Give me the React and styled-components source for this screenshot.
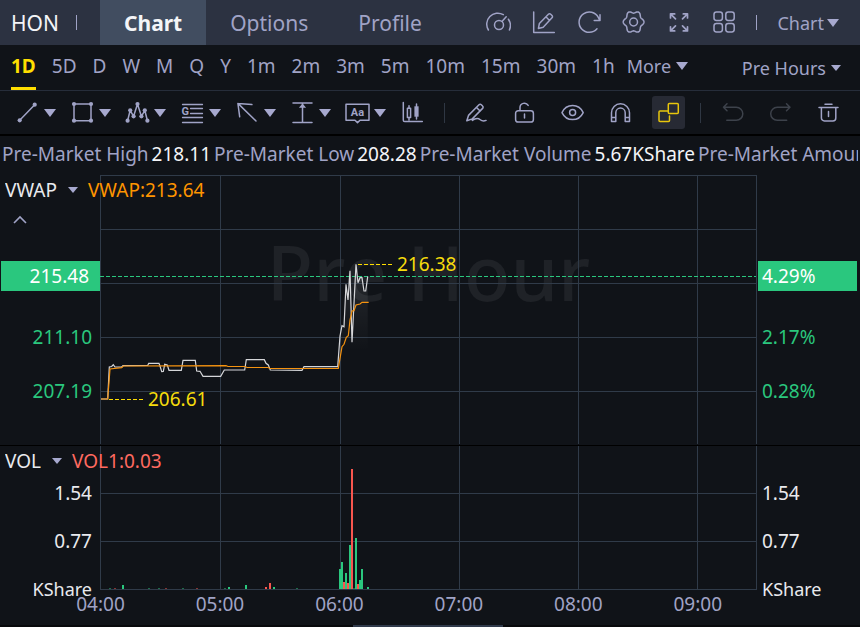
import { useState } from "react";
import styled, { createGlobalStyle } from "styled-components";


const GlobalStyle = createGlobalStyle`
*{
  box-sizing: border-box;
}
body{
  margin: 0;
  background: #101318;
  color: #a0a3c6;
  font-family: "Noto Sans", "Open Sans", sans-serif;
  font-size: 19px;
}
button, select{
  margin: 0;
  padding: 0;
  border: none;
  background: transparent;
  color: inherit;
  font: inherit;
  cursor: pointer;
}
`
const Page = styled.main`
display: flex;
flex-direction: column;
min-height: 100vh;
overflow: hidden;
`
const Header = styled.header`
display: flex;
align-items: center;
height: 45px;
padding-right: 21px;
background: #2c3241;
`
const Symbol = styled.h1`
display: flex;
align-items: center;
justify-content: space-between;
width: 100px;
margin: 0;
padding: 0 23px 0 11px;
font-size: 21px;
font-weight: 400;
color: #f4f5f8;
`
const Divider = styled.span`
width: 1px;
height: ${props => props.$tall ? 20 : 15}px;
background: ${props => props.$tall ? "#2f3743" : "#a0a3c6"};
`
const Tabs = styled.nav`
display: flex;
align-self: stretch;
`
const Tab = styled.button`
padding: 0 ${props => props.$active ? 24 : 0}px;
margin-right: 24px;
font-size: 21px;
font-weight: ${props => props.$active ? 700 : 400};
color: ${props => props.$active ? "#f4f5f8" : "#a0a3c6"};
background: ${props => props.$active ? "#414d60" : "transparent"};
& + &{
  margin-right: 50px;
}
`
const HeaderTools = styled.div`
display: flex;
align-items: center;
gap: 20px;
margin-left: auto;
`
const IconButton = styled.button`
display: flex;
color: #a0a3c6;
`
const Picker = styled.label`
display: flex;
align-items: center;
gap: ${props => props.$gap}px;
font-size: ${props => props.$size || 18}px;
color: ${props => props.$color || "#a0a3c6"};
`
const PickerSelect = styled.select`
appearance: none;
field-sizing: content;
outline: none;
`
const Periods = styled.nav`
display: flex;
align-items: stretch;
gap: 16px;
height: 46px;
padding: 0 19px 0 11px;
border-bottom: 1px solid #262d3a;
`
const Period = styled.button`
padding-bottom: ${props => props.$active ? 0 : 3}px;
font-weight: ${props => props.$active ? 700 : 400};
color: ${props => props.$active ? "#ffde00" : "#a0a3c6"};
border-bottom: ${props => props.$active ? "3px solid #ffde00" : "none"};
`
const MoreButton = styled(Period)`
display: flex;
align-items: center;
gap: 5px;
margin-left: -4px;
font-size: 18px;
`
const Session = styled.div`
display: flex;
align-items: center;
margin-left: auto;
`
const Toolbar = styled.div`
display: flex;
align-items: center;
height: 45px;
padding-left: 15px;
border-bottom: 2px solid #000;
`
const DrawTools = styled.div`
display: flex;
gap: 14px;
margin-right: 19px;
`
const DrawTool = styled.button`
display: flex;
align-items: center;
gap: 4px;
color: #a0a3c6;
`
const Actions = styled.div`
display: flex;
align-items: center;
gap: 15px;
`
const Action = styled.button`
display: flex;
align-items: center;
justify-content: center;
width: 33px;
height: 33px;
border-radius: 3px;
color: ${props => props.$on ? "#e8c60c" : "#a0a3c6"};
background: ${props => props.$on ? "#272a34" : "transparent"};
&:disabled{
  color: #3d424b;
}
`
const Quote = styled.dl`
display: flex;
gap: 3px;
height: 39px;
margin: 0 2px;
line-height: 37px;
white-space: nowrap;
overflow: hidden;
`
const QuoteItem = styled.div`
display: flex;
gap: 3px;
`
const QuoteName = styled.dt`
color: #a0a3c6;
`
const QuoteValue = styled.dd`
margin: 0;
color: #f4f5f8;
`
const Panel = styled.section`
position: relative;
display: grid;
grid-template-columns: 100px 1fr 103px;
`
const PricePanel = styled(Panel)`
border-bottom: 1px solid #000;
`
const Legend = styled.div`
position: absolute;
z-index: 1;
top: 0;
left: 5px;
display: flex;
align-items: center;
gap: 10px;
height: 30px;
`
const LegendValue = styled.span`
color: ${props => props.$color};
`
const Collapse = styled.button`
position: absolute;
top: 40px;
left: 13px;
display: flex;
`
const Axis = styled.div`
display: flex;
flex-direction: column;
gap: ${props => props.$gap}px;
padding-top: ${props => props.$top}px;
line-height: 30px;
text-align: ${props => props.$side};
color: ${props => props.$color};
`
const AxisLabel = styled.span`
padding: 0 8px 0 5px;
`
const AxisUnit = styled(AxisLabel)`
font-size: 18px;
`
const PriceTag = styled.span`
margin: 0 ${props => props.$side === "left" ? 3 : 0}px 7px 1px;
padding: 0 11px 0 4px;
color: #fff;
background: #2ac77e;
`
const Plot = styled.div`
position: relative;
`
const PlotSvg = styled.svg`
position: relative;
display: block;
width: 100%;
height: ${props => props.$height}px;
`
const Watermark = styled.div`
position: absolute;
inset: 0 0 76px;
display: flex;
align-items: center;
justify-content: center;
font-size: 76px;
font-weight: 500;
line-height: 1;
white-space: nowrap;
color: #1f2227;
`
const Mark = styled.span`
position: absolute;
top: ${props => props.$top}px;
left: ${props => props.$left}%;
line-height: 30px;
color: #f6dc0c;
`
const Hours = styled.div`
display: grid;
grid-template-columns: repeat(5, 2fr) 1fr;
height: 35px;
line-height: 28px;
`
const Hour = styled.span`
display: flex;
justify-content: center;
width: 1px;
`
const ScrollTrack = styled.div`
height: 2px;
background: #08090c;
`
const ScrollThumb = styled.div`
width: 150px;
height: 2px;
margin-left: 41%;
background: #303a4b;
`

const Icon = ({ children, width = 1.5 }) => (
  <svg width="25" height="25" viewBox="0 0 25 25" fill="none" stroke="currentColor" strokeWidth={width} strokeLinecap="round" strokeLinejoin="round" aria-hidden="true">
    {children}
  </svg>
)

const Caret = ({ small }) => (
  <svg width={small ? 10 : 12} height={small ? 6 : 8} viewBox="0 0 12 8" preserveAspectRatio="none" fill="#a7a9cf" aria-hidden="true">
    <path d="M0 0h12L6 8z" />
  </svg>
)

const Dots = ({ points }) => points.map(([x, y]) => (
  <circle key={`${x}-${y}`} cx={x} cy={y} r="2.1" fill="currentColor" stroke="none" />
))

const gearPath = () => {
  const points = []
  for (let i = 0; i < 96; i++) {
    const a = i / 96 * Math.PI * 2
    const r = 9.3 + Math.cos(a * 6) * 1.1
    points.push(`${(12.6 + r * Math.cos(a)).toFixed(2)} ${(12 + r * 1.08 * Math.sin(a)).toFixed(2)}`)
  }
  return `M${points.join("L")}z`
}

const headerIcons = [
  {
    name: "Speed", art: <>
      <path d="M2.4 20A11 11 0 0 1 17.3 4.7M22.4 9.2a11 11 0 0 1 1 10.8M16.2 11.3l4-4.6" />
      <circle cx="13" cy="15" r="4.5" />
    </>
  },
  {
    name: "Edit chart", art: <path d="M2.7 2v20.5h20.6M7.4 18.4l1-5 9-9.2a1.6 1.6 0 0 1 2.3 0l1.3 1.3a1.6 1.6 0 0 1 0 2.3l-8.8 9.4zM14.9 6.8l3.4 3.4" />
  },
  {
    name: "Refresh", art: <path d="M21 18.8a10.2 10.2 0 1 1 1.3-11.4l1.5 2.9M24 4.7v5.8h-5.8" />
  },
  {
    name: "Settings", art: <>
      <path d={gearPath()} />
      <circle cx="12.6" cy="12" r="3.9" />
    </>
  },
  {
    name: "Full screen", art: <path d="M4.5 8V3.9h4.2M4.5 3.9l5 5M17.3 3.9h4.2V8M21.5 3.9l-5 5M4.5 16.8v4.1h4.2M4.5 20.9l5-5M17.3 20.9h4.2v-4.1M21.5 20.9l-5-5" strokeWidth="1.7" />
  },
  {
    name: "Layout", art: <>
      <rect x="3" y="2" width="8.4" height="8.4" rx="2.4" />
      <rect x="14.8" y="2" width="8.4" height="8.4" rx="2.4" />
      <rect x="3" y="13.6" width="8.4" height="8.4" rx="2.4" />
      <rect x="14.8" y="13.6" width="8.4" height="8.4" rx="2.4" />
    </>
  },
]

const zigzag = [[2.6, 20.7], [5.2, 10.3], [8.6, 16.3], [12.5, 4], [16.4, 16.3], [19.8, 10.3], [22.4, 20.7]]

const drawTools = [
  {
    name: "Trend line", art: <>
      <path d="M4.7 20.3L19.7 4.7" />
      <Dots points={[[4.7, 20.3], [19.7, 4.7]]} />
    </>
  },
  {
    name: "Rectangle", art: <>
      <path d="M4 4h17v16.7H4z" />
      <Dots points={[[4, 4], [21, 4], [4, 20.7], [21, 20.7]]} />
    </>
  },
  {
    name: "Pattern", art: <>
      <path d={`M${zigzag.join("L")}`} />
      <Dots points={zigzag} />
    </>
  },
  {
    name: "Gann", art: <>
      <path d="M2.5 4.5h20M10.5 8.5h12M10.5 13.5h12M2.5 17.5h20M2.5 22.5h20" strokeWidth="1.3" />
      <text x="1.4" y="15.2" fill="currentColor" stroke="none" fontSize="11" fontWeight="700" fontFamily="Roboto, sans-serif">G</text>
    </>
  },
  {
    name: "Arrow", art: <path d="M21 21L2.9 3.4l14 1.2M2.9 3.4l1.8 13.4" />
  },
  {
    name: "Measure", art: <>
      <path d="M3 3h19M3 22.5h19M12.5 4v18" />
      <path d="M12.5 3.5l3.6 4.3H8.9z" fill="currentColor" stroke="none" />
    </>
  },
  {
    name: "Text", art: <>
      <path d="M1 4.2h23v16h-9l-2.5 2.4L10 20.2H1z" />
      <text x="12.5" y="16" textAnchor="middle" fill="currentColor" stroke="none" fontSize="11" fontWeight="700" fontFamily="Roboto, sans-serif">Aa</text>
    </>
  },
  {
    name: "Candles", plain: true, art: <>
      <path d="M3.3 2.5v17.7a1.4 1.4 0 0 0 1.4 1.4h17.6M9 5.8v2.5M9 17.5v2.5M16.5 4v15" />
      <path d="M7.4 8.3h3.2v9.2H7.4z" />
      <path d="M14.4 6.3h4.2v10.4h-4.2z" fill="currentColor" stroke="none" />
    </>
  },
]

const actions = [
  {
    name: "Brush", art: <path d="M2.8 20.8l1.7-5.4L15 4.7a1.6 1.6 0 0 1 2.3 0l1.3 1.4a1.6 1.6 0 0 1 0 2.3L8.3 18.9zM12.5 7.4l3.6 3.7M8.3 20.4c3-2.3 6-2.4 8-.7 1.7 1.4 3.6 1.5 5.8.7" />
  },
  {
    name: "Unlock", art: <path d="M6.2 10.8h12.6a2.6 2.6 0 0 1 2.6 2.6v6a2.6 2.6 0 0 1-2.6 2.6H6.2a2.6 2.6 0 0 1-2.6-2.6v-6a2.6 2.6 0 0 1 2.6-2.6zM8 10.5V7.7a4.4 4.4 0 0 1 8.2-2.3M12.5 14v4" />
  },
  {
    name: "Show drawings", art: <>
      <path d="M2 12.6C4 8.4 7.8 5.6 12.6 5.6s8.6 2.8 10.6 7c-2 4.2-5.8 7-10.6 7S4 16.8 2 12.6z" />
      <circle cx="12.6" cy="12.6" r="3" />
    </>
  },
  {
    name: "Magnet", art: <path d="M3.5 21.5v-8.7a9 9 0 0 1 18 0v8.7h-4.3v-8.7a4.7 4.7 0 0 0-9.4 0v8.7zM3.5 17.5h4.3M17.2 17.5h4.3" />
  },
  {
    name: "Keep drawing", on: true, art: <>
      <rect x="12.3" y="3.5" width="10" height="10" rx="1" />
      <path d="M9.5 11H4a1 1 0 0 0-1 1v8.5a1 1 0 0 0 1 1h8.5a1 1 0 0 0 1-1V16M9.5 11h2.8" />
    </>
  },
]

const history = [
  { name: "Undo", off: true, art: <path d="M7 3.8L3.5 7.3 7 10.8M3.5 7.3h12.8a6.5 6.5 0 0 1 0 13H6.8" /> },
  { name: "Redo", off: true, art: <path d="M18.5 3.8L22 7.3l-3.5 3.5M22 7.3H9.2a6.5 6.5 0 0 0 0 13h9.5" /> },
  { name: "Delete", art: <path d="M3 7.5h19M9 4.3h7M5.4 7.7v10.2a3 3 0 0 0 3 3h8.4a3 3 0 0 0 3-3V7.7M12.5 11.5v5" /> },
]

const periods = ["1D", "5D", "D", "W", "M", "Q", "Y", "1m", "2m", "3m", "5m", "10m", "15m", "30m", "1h"]

const quotes = [
  { name: "Pre-Market High", value: "218.11" },
  { name: "Pre-Market Low", value: "208.28" },
  { name: "Pre-Market Volume", value: "5.67KShare" },
  { name: "Pre-Market Amount", value: "" },
]

const hours = ["04:00", "05:00", "06:00", "07:00", "08:00", "09:00"]

const hourLines = [0.5, 120.5, 240.5, 359.5, 478.5, 597.5, 656.5]

const priceLine = "1,224 7.7,224 9.3,192 11.7,191.5 13.3,189.7 15,192 21.7,192 23,190.7 47.7,190.5 48.7,188.3 59,188.3 60,191 61.7,196.7 63.3,196.5 64.7,189.3 67.3,190 69,195.3 81.3,195.3 83,185.3 95.3,185.3 96.7,196 100,196.3 103,201.3 120.7,201.3 124.3,195 144.7,195 146.3,184.7 164.3,184.7 166,188.3 168.3,190 170.3,195 202,195.3 204,191.7 237.7,191.7 240,161 242,150.7 244,151.7 246,109.3 248,125 250,95.7 252,167.3 256,89.3 258,107.7 260,102.7 262,102.7 264,116 265.7,116 267.7,101.7"

const vwapLine = "1,224 7.7,224 10,194 21.7,192.7 23.3,191 126,190.7 128,191.5 145,191.5 147,192.5 168,192.5 170,193.5 238.3,193.3 242,171.7 244,169.3 246.3,162.3 248.3,160.7 250,145 252,136 254,135.7 256,130 260,129 262,127.3 268.7,127.3"

// x, height, rising
const volumes = [
  [9, 1, 1], [14, 1, 0], [22, 4, 1], [48, 1, 1], [58, 1, 1], [65, 1, 0], [82, 1, 1], [96, 1, 0],
  [124, 1, 1], [128, 2, 1], [145, 4, 1], [165, 2, 0], [169, 6, 0], [173, 2, 1], [196, 1, 1],
  [239, 20, 1], [241, 27, 1], [243, 7, 0], [245, 16, 1], [247, 6, 0], [249, 44, 1], [251, 120, 0],
  [253, 1, 1], [255, 51, 1], [257, 5, 0], [259, 9, 1], [261, 20, 1], [267, 2, 1],
]

const Grid = ({ rows, height }) => (
  <g stroke="#303b49">
    {rows.map(y => <line key={y} x1="0" x2="657" y1={y} y2={y} />)}
    {hourLines.map(x => <line key={x} x1={x} x2={x} y1="0" y2={height} />)}
  </g>
)

const PickerMenu = ({ label, options, gap, size, color, small }) => (
  <Picker $gap={gap} $size={size} $color={color}>
    <PickerSelect aria-label={label}>
      {options.map(option => <option key={option}>{option}</option>)}
    </PickerSelect>
    <Caret small={small} />
  </Picker>
)

const App = () => {
  const [tab, setTab] = useState("Chart")
  const [period, setPeriod] = useState("1D")

  return (
    <Page>
      <GlobalStyle />
      <Header>
        <Symbol>HON <Divider /></Symbol>
        <Tabs>
          {["Chart", "Options", "Profile"].map(name => (
            <Tab key={name} $active={name === tab} onClick={() => setTab(name)}>{name}</Tab>
          ))}
        </Tabs>
        <HeaderTools>
          {headerIcons.map(({ name, art }) => (
            <IconButton key={name} aria-label={name}><Icon>{art}</Icon></IconButton>
          ))}
          <Divider />
          <PickerMenu label="View" options={["Chart"]} gap={3} />
        </HeaderTools>
      </Header>

      <Periods>
        {periods.map(name => (
          <Period key={name} $active={name === period} onClick={() => setPeriod(name)}>{name}</Period>
        ))}
        <MoreButton>More <Caret /></MoreButton>
        <Session>
          <PickerMenu label="Session" options={["Pre Hours"]} gap={5} small />
        </Session>
      </Periods>

      <Toolbar>
        <DrawTools>
          {drawTools.map(({ name, art, plain }) => (
            <DrawTool key={name} aria-label={name}>
              <Icon>{art}</Icon>
              {!plain && <Caret />}
            </DrawTool>
          ))}
        </DrawTools>
        <Actions>
          <Divider $tall />
          {actions.map(({ name, art, on }) => (
            <Action key={name} aria-label={name} $on={on}><Icon>{art}</Icon></Action>
          ))}
          <Divider $tall />
          {history.map(({ name, art, off }) => (
            <Action key={name} aria-label={name} disabled={off}><Icon>{art}</Icon></Action>
          ))}
        </Actions>
      </Toolbar>

      <Quote>
        {quotes.map(({ name, value }) => (
          <QuoteItem key={name}>
            <QuoteName>{name}</QuoteName>
            {value && <QuoteValue>{value}</QuoteValue>}
          </QuoteItem>
        ))}
      </Quote>

      <PricePanel>
        <Legend>
          <PickerMenu label="Indicator" options={["VWAP"]} gap={11} size={19} color="#e9eaee" small />
          <LegendValue $color="#ff9500">VWAP:213.64</LegendValue>
        </Legend>
        <Collapse aria-label="Collapse">
          <svg width="14" height="10" viewBox="0 0 14 10" fill="none" stroke="#a0a3c6" strokeWidth="1.6" aria-hidden="true">
            <path d="M1 8l6-6 6 6" />
          </svg>
        </Collapse>
        <Axis $side="right" $top={86} $gap={24} $color="#2ac77e">
          <PriceTag $side="right">215.48</PriceTag>
          <AxisLabel>211.10</AxisLabel>
          <AxisLabel>207.19</AxisLabel>
        </Axis>
        <Plot>
          <Watermark>Pre Hour</Watermark>
          <PlotSvg $height={270} viewBox="0 0 657 270" preserveAspectRatio="none">
            <defs>
              <linearGradient id="area" gradientUnits="userSpaceOnUse" x1="0" x2="0" y1="90" y2="176">
                <stop offset="0" stopColor="#fff" stopOpacity="0.1" />
                <stop offset="1" stopColor="#fff" stopOpacity="0" />
              </linearGradient>
            </defs>
            <Grid rows={[0.5, 54.5, 108.5, 162.5, 216.5]} height={269} />
            <polygon points={`1,269 ${priceLine} 267.7,269`} fill="url(#area)" />
            <line x1="0" x2="656" y1="101.5" y2="101.5" stroke="#2ac77e" strokeDasharray="4 2" />
            <polyline points={priceLine} fill="none" stroke="#d5d6d9" strokeWidth="1.2" />
            <polyline points={vwapLine} fill="none" stroke="#f59310" strokeWidth="1.2" />
            <path d="M258 89.5h34M9 224.5h34" stroke="#ffde00" strokeDasharray="4 2" />
          </PlotSvg>
          <Mark $top={74} $left={45.2}>216.38</Mark>
          <Mark $top={209} $left={7.3}>206.61</Mark>
        </Plot>
        <Axis $side="left" $top={86} $gap={24} $color="#2ac77e">
          <PriceTag $side="left">4.29%</PriceTag>
          <AxisLabel>2.17%</AxisLabel>
          <AxisLabel>0.28%</AxisLabel>
        </Axis>
      </PricePanel>

      <Panel>
        <Legend>
          <PickerMenu label="Volume indicator" options={["VOL"]} gap={11} size={19} color="#e9eaee" small />
          <LegendValue $color="#ff6a60">VOL1:0.03</LegendValue>
        </Legend>
        <Axis $side="right" $top={32} $gap={18} $color="#e9eaee">
          <AxisLabel>1.54</AxisLabel>
          <AxisLabel>0.77</AxisLabel>
          <AxisUnit>KShare</AxisUnit>
        </Axis>
        <Plot>
          <PlotSvg $height={144} viewBox="0 0 657 144" preserveAspectRatio="none">
            <Grid rows={[47.5, 95.5, 143.5]} height={144} />
            {volumes.map(([x, size, up]) => (
              <rect key={x} x={x} y={143 - size} width="2" height={size} fill={up ? "#2ac77e" : "#f8564e"} opacity={size > 1 ? 1 : 0.5} />
            ))}
          </PlotSvg>
          <Hours>
            {hours.map(hour => <Hour key={hour}>{hour}</Hour>)}
          </Hours>
        </Plot>
        <Axis $side="left" $top={32} $gap={18} $color="#e9eaee">
          <AxisLabel>1.54</AxisLabel>
          <AxisLabel>0.77</AxisLabel>
          <AxisUnit>KShare</AxisUnit>
        </Axis>
      </Panel>

      <ScrollTrack>
        <ScrollThumb />
      </ScrollTrack>
    </Page>
  );
}
export default App;
